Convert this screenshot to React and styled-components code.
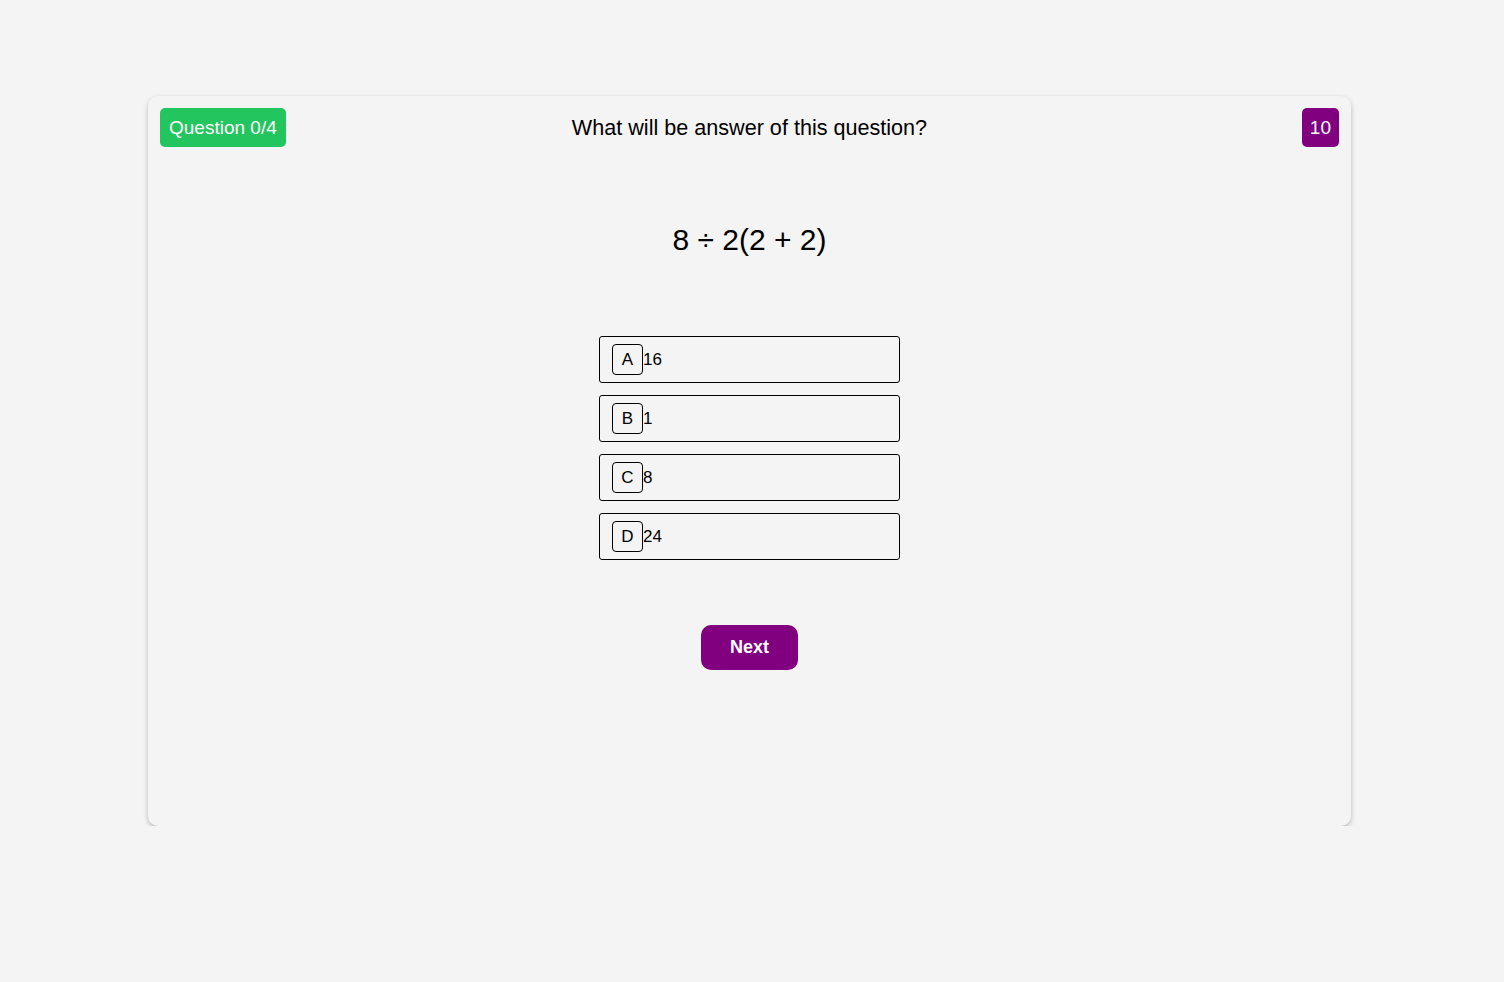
import React from 'react';
import styled, { createGlobalStyle } from 'styled-components';

const GlobalStyle = createGlobalStyle`
  body {
    margin: 0;
    background-color: #f4f4f4;
    font-family: "Liberation Sans", Arial, sans-serif;
  }
`;

const Page = styled.div`
  padding-top: 96px;
  display: flex;
  justify-content: center;
`;

const Card = styled.div`
  width: 1203px;
  height: 730px;
  margin-right: 5px;
  box-sizing: border-box;
  padding: 12px;
  background-color: #f4f4f4;
  border-radius: 10px;
  box-shadow: 0 2px 5px rgba(0, 0, 0, 0.25);
  display: flex;
  flex-direction: column;
  align-items: center;
`;

const Header = styled.div`
  width: 100%;
  display: grid;
  grid-template-columns: 1fr auto 1fr;
  align-items: center;
`;

const Badge = styled.div`
  justify-self: ${({ end }) => (end ? 'end' : 'start')};
  height: 39px;
  box-sizing: border-box;
  padding: 0 ${({ end }) => (end ? '8px' : '9px')};
  border-radius: 5px;
  display: flex;
  align-items: center;
  color: #fff;
  font-size: 19px;
  background-color: ${({ color }) => color};
`;

const Title = styled.div`
  font-size: 21.6px;
  color: #000;
`;

const Equation = styled.div`
  margin-top: 76px;
  font-size: 30px;
  color: #000;
`;

const Options = styled.div`
  margin-top: 79px;
  display: flex;
  flex-direction: column;
  gap: 12px;
`;

const Option = styled.div`
  width: 301px;
  height: 47px;
  box-sizing: border-box;
  border: 1px solid #000;
  border-radius: 3px;
  padding: 0 12px;
  display: flex;
  align-items: center;
  font-size: 17px;
  color: #000;
  cursor: pointer;
`;

const Letter = styled.span`
  width: 31px;
  height: 31px;
  box-sizing: border-box;
  border: 1px solid #000;
  border-radius: 4px;
  display: flex;
  align-items: center;
  justify-content: center;
`;

const NextButton = styled.button`
  margin-top: 65px;
  width: 97px;
  height: 45px;
  border: none;
  border-radius: 10px;
  background-color: #800080;
  color: #fff;
  font-family: "Liberation Sans", Arial, sans-serif;
  font-size: 18px;
  font-weight: 700;
  cursor: pointer;
`;

const options = [
  { key: 'A', value: '16' },
  { key: 'B', value: '1' },
  { key: 'C', value: '8' },
  { key: 'D', value: '24' },
];

const App = () => (
  <>
    <GlobalStyle />
    <Page>
      <Card>
        <Header>
          <Badge color="#22c55e">Question 0/4</Badge>
          <Title>What will be answer of this question?</Title>
          <Badge color="#800080" end>10</Badge>
        </Header>
        <Equation>8 ÷ 2(2 + 2)</Equation>
        <Options>
          {options.map((o) => (
            <Option key={o.key}>
              <Letter>{o.key}</Letter>
              {o.value}
            </Option>
          ))}
        </Options>
        <NextButton>Next</NextButton>
      </Card>
    </Page>
  </>
);

export default App;
